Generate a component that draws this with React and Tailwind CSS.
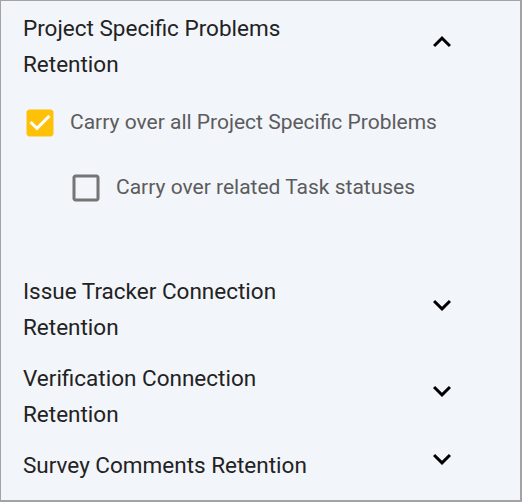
import React, { useState } from 'react';

const ExpandMore = () => (
  <svg viewBox="0 0 24 24" className="w-[36px] h-[36px] fill-black">
    <path d="M16.59 8.59 12 13.17 7.41 8.59 6 10l6 6 6-6z" />
  </svg>
);

const ExpandLess = () => (
  <svg viewBox="0 0 24 24" className="w-[36px] h-[36px] fill-black">
    <path d="M12 8l-6 6 1.41 1.41L12 10.83l4.59 4.58L18 14z" />
  </svg>
);

const CheckedBox = () => (
  <svg viewBox="0 0 24 24" className="w-[36px] h-[36px] fill-[#ffc107]">
    <path d="M19 3H5c-1.11 0-2 .9-2 2v14c0 1.1.89 2 2 2h14c1.11 0 2-.9 2-2V5c0-1.1-.89-2-2-2z" />
    <path className="fill-white" d="M10 17l-5-5 1.41-1.41L10 14.17l7.59-7.59L19 8l-9 9z" />
  </svg>
);

const EmptyBox = () => (
  <svg viewBox="0 0 24 24" className="w-[36px] h-[36px] fill-[#757575]">
    <path d="M19 5v14H5V5h14m0-2H5c-1.1 0-2 .9-2 2v14c0 1.1.9 2 2 2h14c1.1 0 2-.9 2-2V5c0-1.1-.9-2-2-2z" />
  </svg>
);

function Section({ lines, open, iconOffset, className }) {
  return (
    <div className={`flex items-start ${className}`}>
      <div className="w-[400px] text-[22.5px] leading-[36px] font-normal text-[#222222]">
        {lines.map((l) => (
          <div key={l}>{l}</div>
        ))}
      </div>
      <div className={`ml-[1px] ${iconOffset}`}>{open ? <ExpandLess /> : <ExpandMore />}</div>
    </div>
  );
}

export default function App() {
  const [all, setAll] = useState(true);
  const [tasks, setTasks] = useState(false);

  return (
    <div
      className="w-[522px] h-[502px] border border-r-2 border-b-2 border-[#a3a3a3] bg-[#f2f5fa] pl-[22px] overflow-hidden"
      style={{ fontFamily: 'Roboto, "Liberation Sans", sans-serif' }}
    >
      <Section
        lines={['Project Specific Problems', 'Retention']}
        open
        iconOffset="mt-[14px]"
        className="mt-[9px]"
      />

      <button
        onClick={() => setAll(!all)}
        className="mt-[23px] flex items-center text-left"
      >
        <span className="-ml-[1px]">{all ? <CheckedBox /> : <EmptyBox />}</span>
        <span className="ml-[12px] text-[21px] text-[#5c5c5c]">Carry over all Project Specific Problems</span>
      </button>

      <button
        onClick={() => setTasks(!tasks)}
        className="mt-[29px] ml-[45px] flex items-center text-left"
      >
        <span>{tasks ? <CheckedBox /> : <EmptyBox />}</span>
        <span className="ml-[12px] text-[21px] text-[#5c5c5c]">Carry over related Task statuses</span>
      </button>

      <Section
        lines={['Issue Tracker Connection', 'Retention']}
        iconOffset="mt-[14px]"
        className="mt-[67px]"
      />
      <Section
        lines={['Verification Connection', 'Retention']}
        iconOffset="mt-[13px]"
        className="mt-[15px]"
      />
      <Section
        lines={['Survey Comments Retention']}
        iconOffset="-mt-[6px]"
        className="mt-[15px]"
      />
    </div>
  );
}
